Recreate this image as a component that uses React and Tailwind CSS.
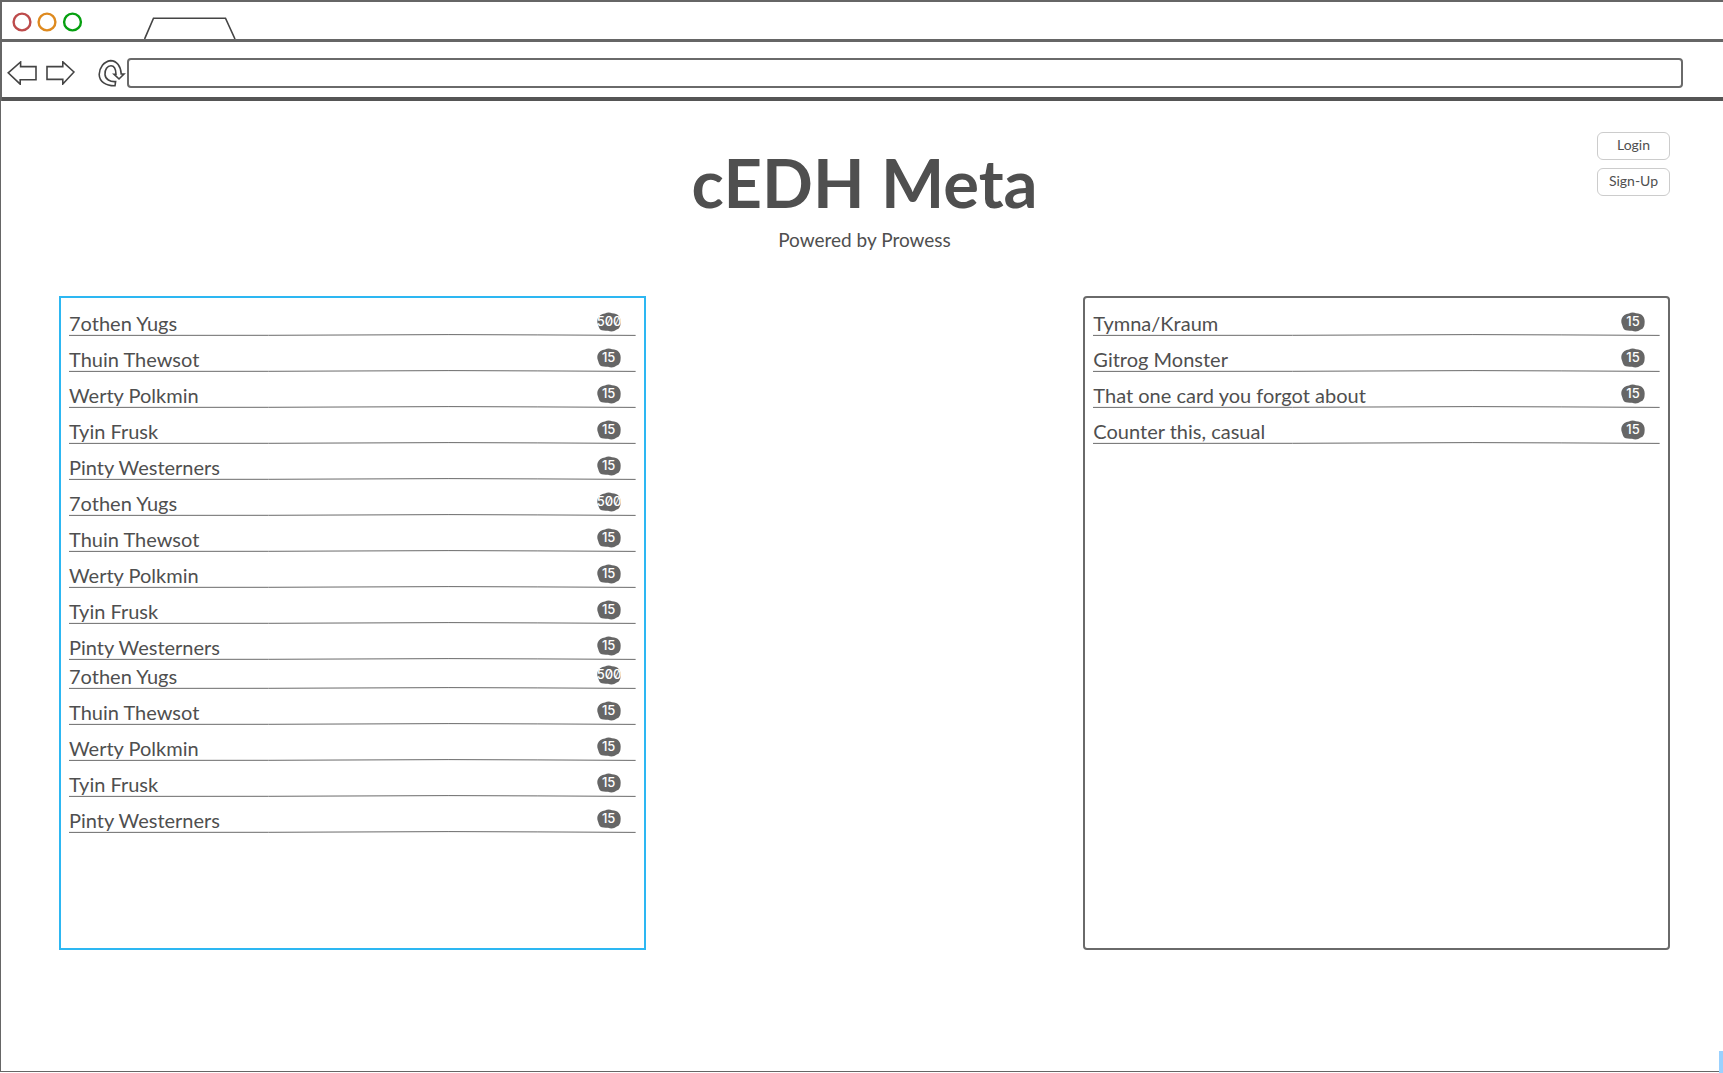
import React from "react";

const names = ["7othen Yugs", "Thuin Thewsot", "Werty Polkmin", "Tyin Frusk", "Pinty Westerners"];

const players = [0, 1, 2].flatMap((group) =>
  names.map((name, i) => ({
    name,
    count: i === 0 ? "500" : "15",
    tight: group === 2 && i === 0,
  }))
);

const decks = ["Tymna/Kraum", "Gitrog Monster", "That one card you forgot about", "Counter this, casual"].map(
  (name) => ({ name, count: "15", tight: false })
);

function Badge({ children }) {
  return (
    <span className="relative mr-[15px] mb-0.5 flex h-5 w-6 shrink-0 overflow-hidden font-[Inter,sans-serif] text-[13px] leading-[18px] font-medium text-white">
      <svg className="absolute inset-0 h-5 w-6" viewBox="0 0 24 20" aria-hidden="true">
        <path
          d="M8 1.400C10 .2 13 .1 15 1.200C18 1.200 20.400 2 21.800 4C23.400 6 24 8.600 23.600 11C23.600 14 22.400 16.800 19.800 17.600C17 19.800 14 20 11 18.800C8 18.400 5 18.800 3.200 17.400C1.800 16 1.600 14 .8 12C0 10 .2 7.600 1 6C1.800 3.600 4.600 1.800 8 1.400Z"
          fill="#666"
        />
      </svg>
      <span className="relative min-w-full text-center whitespace-nowrap [font-feature-settings:'zero']">
        {children}
      </span>
    </span>
  );
}

function Rule() {
  return (
    <svg className="block h-[2px] w-full" viewBox="0 0 568 2" preserveAspectRatio="none" aria-hidden="true">
      <path d="M0 1.4 200 1.3 380 .6 470 .9 568 1.4" fill="none" stroke="#6a6a6a" strokeWidth="1" />
    </svg>
  );
}

function Row({ name, count, tight }) {
  return (
    <li className={tight ? "flex h-[29px] flex-col justify-end" : "flex h-9 flex-col justify-end"}>
      <div className="flex items-end justify-between">
        <span className="text-[20px] leading-[22px]">{name}</span>
        <Badge>{count}</Badge>
      </div>
      <Rule />
    </li>
  );
}

function Panel({ label, items, selected }) {
  return (
    <section
      aria-label={label}
      className={
        selected
          ? "min-h-[654px] border-2 border-[#2db7f2] px-2 pt-[2px]"
          : "min-h-[654px] rounded border-2 border-[#6a6a6a] px-2 pt-[2px]"
      }
    >
      <ul>
        {items.map((item, i) => (
          <Row key={i} {...item} />
        ))}
      </ul>
    </section>
  );
}

function BrowserBar() {
  return (
    <header className="border-t-2 border-l-2 border-[#666]">
      <div className="flex h-10 items-end border-b-[3px] border-[#666]">
        <svg className="mb-[7px] ml-[10px] h-5 w-[72px]" viewBox="0 0 72 20" fill="none" strokeWidth="2.4" aria-hidden="true">
          <circle cx="10" cy="10" r="8.4" stroke="#bd4b4b" />
          <circle cx="35" cy="10" r="8.4" stroke="#de8a1f" />
          <circle cx="60.5" cy="10" r="8.4" stroke="#06a010" />
        </svg>
        <svg className="ml-[60px] h-[22px] w-[92px]" viewBox="0 0 92 22" fill="none" stroke="#444" strokeWidth="1.6" aria-hidden="true">
          <path d="M.6 22 9.5 1.2H81.5L91 22" />
        </svg>
      </div>
      <div className="flex h-[59px] items-center border-b-4 border-[#555] pt-[7px]">
        <button type="button" aria-label="Back" className="ml-[5px]">
          <svg className="block h-6 w-[30px]" viewBox="0 0 30 24" fill="none" stroke="#444" strokeWidth="1.6">
            <path d="M1.2 11.8 13.6 1V5.6H29V18.8H13.2V23.2Z" />
          </svg>
        </button>
        <button type="button" aria-label="Forward" className="ml-2">
          <svg className="block h-6 w-[30px]" viewBox="0 0 30 24" fill="none" stroke="#444" strokeWidth="1.6">
            <path d="M29 11 17.8 .8V5.6H2V18.4H17.8V23Z" />
          </svg>
        </button>
        <button type="button" aria-label="Reload" className="ml-[23px]">
          <svg className="block h-7 w-7" viewBox="0 0 28 28" fill="none" stroke="#444" strokeWidth="1.6">
            <path d="M17.6 22.6C12 23 7.4 20.2 7 15.6C6.600 10.600 9.400 6.800 13 6.800C16.200 6.800 17.800 10.200 18 15.200H16L21 20 26 15H23.200C23 7.600 18.800 1.600 12.600 1.600C5.600 2.600 1.600 8.600 1.200 15.400C1.400 22.600 7.800 27 17 26.800Z" />
          </svg>
        </button>
        <input
          type="text"
          aria-label="Address"
          className="mr-[40px] ml-px h-[30px] min-w-0 flex-1 rounded border-2 border-[#6a6a6a] px-2 text-base outline-none"
        />
      </div>
    </header>
  );
}

export default function App() {
  return (
    <div className="relative flex min-h-screen flex-col bg-white font-[Lato,sans-serif] text-[#4f4f4f]">
      <BrowserBar />
      <main className="mb-px flex-1 border-b border-l border-[#666] pr-[53px] pl-[58px]">
        <div className="grid grid-cols-[1fr_auto_1fr] pt-[31px]">
          <div className="col-start-2 pt-2 text-center">
            <h1 className="text-[67px] leading-[84px] font-bold">cEDH Meta</h1>
            <p className="text-[19px] leading-8">Powered by Prowess</p>
          </div>
          <div className="flex flex-col items-end gap-2">
            <button type="button" className="h-7 w-[73px] rounded-md border border-[#ccc] pb-0.5 text-sm leading-5">
              Login
            </button>
            <button type="button" className="h-7 w-[73px] rounded-md border border-[#ccc] pb-0.5 text-sm leading-5">
              Sign-Up
            </button>
          </div>
        </div>
        <div className="grid grid-cols-[587fr_438fr_587fr] pt-10">
          <Panel label="Players" items={players} selected />
          <div />
          <Panel label="Decks" items={decks} />
        </div>
      </main>
      <div className="absolute right-0 bottom-0 h-[22px] w-1 bg-[#99d1ff]" />
    </div>
  );
}
